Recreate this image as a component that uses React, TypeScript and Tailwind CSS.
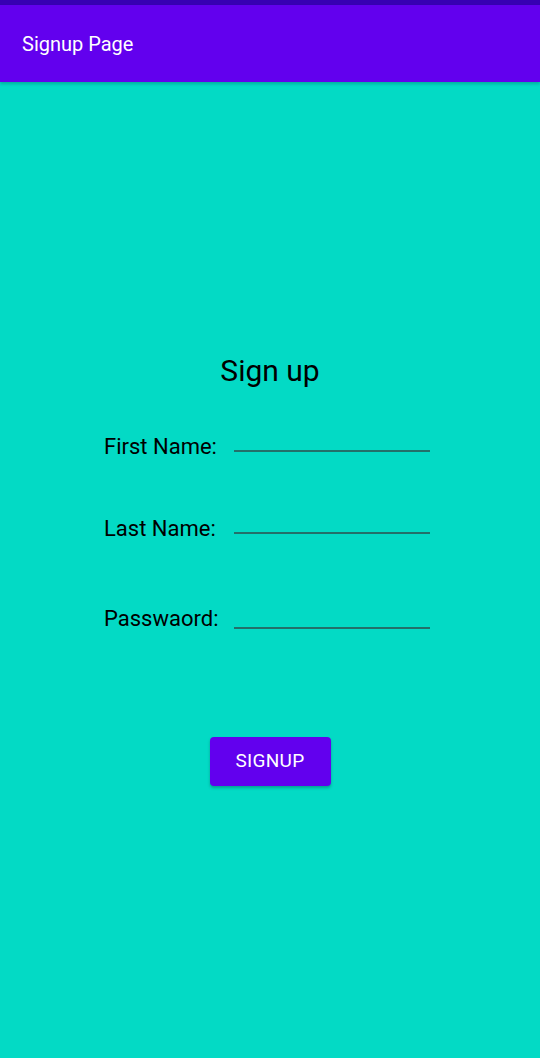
export default function App() {
  return (
    <div className="flex min-h-[1058px] w-[540px] flex-col bg-[#03dac5] font-['Roboto',sans-serif]">
      <div className="h-[5px] bg-[#3700b3]" />
      <header className="flex h-[77px] items-center bg-[#6200ee] px-[22px] shadow-[0_2px_3px_rgba(0,0,0,0.2)]">
        <h1 className="text-[20px] text-white">Signup Page</h1>
      </header>
      <main className="flex flex-col items-center pt-[271px]">
        <h2 className="text-[30px] leading-[36px] text-black">Sign up</h2>
        <div className="mr-[6px] mt-[44px] flex w-[326px] flex-col">
          <div className="flex items-center gap-[16px]">
            <label className="w-[114px] text-[22px] leading-[28px] text-black">First Name:</label>
            <div className="mt-[8px] h-[1.5px] w-[196px] bg-[#23706a]" />
          </div>
          <div className="mt-[54px] flex items-center gap-[16px]">
            <label className="w-[114px] text-[22px] leading-[28px] text-black">Last Name:</label>
            <div className="mt-[8px] h-[1.5px] w-[196px] bg-[#23706a]" />
          </div>
          <div className="mt-[62px] flex items-center gap-[16px]">
            <label className="w-[114px] whitespace-nowrap text-[22px] leading-[28px] text-black">Passwaord:</label>
            <div className="mt-[18px] h-[1.5px] w-[196px] bg-[#23706a]" />
          </div>
        </div>
        <button
          type="button"
          className="mt-[104px] h-[49px] w-[121px] rounded-[4px] bg-[#6200ee] text-[19px] tracking-[0.3px] text-white shadow-[0_2px_3px_rgba(0,0,0,0.25)]"
        >
          SIGNUP
        </button>
      </main>
    </div>
  );
}
